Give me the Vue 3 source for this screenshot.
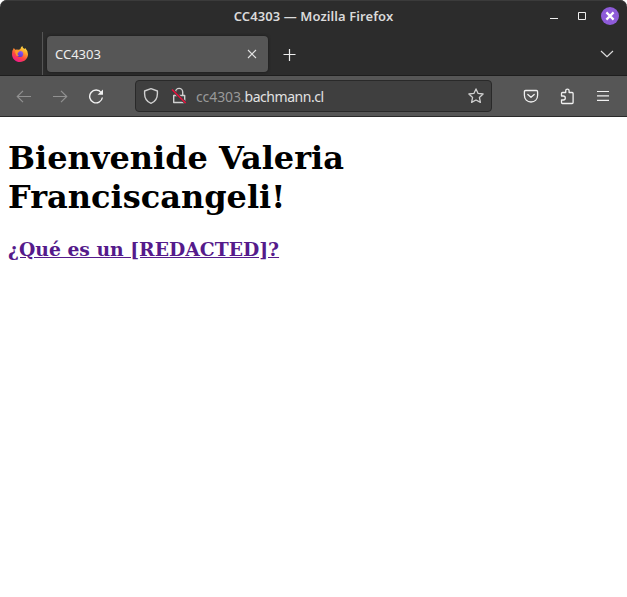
<script setup>
const title = 'CC4303 — Mozilla Firefox'
const tab = 'CC4303'
</script>

<template>
  <div class="window">
    <div class="chrome">
      <header class="titlebar">
        <span class="title">{{ title }}</span>
        <div class="controls">
          <svg width="18" height="18" viewBox="0 0 18 18"><path d="M5 11.5h8" stroke="#eee" /></svg>
          <svg width="18" height="18" viewBox="0 0 18 18"><path d="M5.5 5.5h7v7h-7z" fill="none" stroke="#eee" /></svg>
          <svg width="18" height="18" viewBox="0 0 18 18"><circle cx="9" cy="9" r="9" fill="#8e5bd9" /><path d="M5.4 5.4l7.2 7.2M12.6 5.4l-7.2 7.2" stroke="#fff" stroke-width="2.2" /></svg>
        </div>
      </header>
      <nav class="tabs">
        <div class="pinned">
          <svg width="18" height="18" viewBox="0 0 18 18">
            <defs>
              <linearGradient id="flame" x1=".85" y1="0" x2=".3" y2="1">
                <stop offset="0" stop-color="#fff44f" /><stop offset=".35" stop-color="#ffa42b" /><stop offset=".65" stop-color="#ff4a3f" /><stop offset="1" stop-color="#ef168f" />
              </linearGradient>
              <linearGradient id="globe" x1=".8" y1="0" x2=".3" y2="1">
                <stop offset="0" stop-color="#9059ff" /><stop offset="1" stop-color="#5a35c4" />
              </linearGradient>
            </defs>
            <path d="M2.8 3.1L4.3 4.8Q6 4.3 7.4 4.8Q8.8 4.6 9.4 3.9Q9.7 2.2 11.3 1Q11.5 3 13.5 4.1L14.2 2.9Q17 5.6 17 9.3C17 13.7 13.4 17 9 17S1 13.6 1 9.2Q1 5.5 2.8 3.1Z" fill="url(#flame)" />
            <circle cx="9.1" cy="9" r="3.1" fill="url(#globe)" />
            <path d="M4 5.2Q7 4.6 8.7 6.6L6.6 7.9Q6.1 9.9 8.2 10.6L5.7 11Q3.9 8.8 4 5.2Z" fill="#ff9a28" />
          </svg>
        </div>
        <div class="tab">
          <span>{{ tab }}</span>
          <svg width="16" height="16" viewBox="0 0 16 16"><path d="M4 4l8 8M12 4l-8 8" stroke="#e2e2e2" stroke-width="1.1" /></svg>
        </div>
        <svg class="plus" width="16" height="16" viewBox="0 0 16 16"><path d="M7.5 3v12M1.5 8.5h12" stroke="#eee" stroke-width="1.2" /></svg>
        <svg class="chevron" width="16" height="16" viewBox="0 0 16 16"><path d="M2 5l6 5.6L14 5" fill="none" stroke="#ddd" stroke-width="1.2" /></svg>
      </nav>
      <div class="toolbar">
        <svg class="back" width="16" height="16" viewBox="0 0 16 16" fill="none" stroke="#919191" stroke-width="1.2"><path d="M15 8.5H1.5M7 2.8L1.3 8.5 7 14.2" /></svg>
        <svg class="forward" width="16" height="16" viewBox="0 0 16 16" fill="none" stroke="#919191" stroke-width="1.2"><path d="M1 8.5h13.5M9 2.8l5.7 5.7L9 14.2" /></svg>
        <svg class="reload" width="16" height="16" viewBox="0 0 16 16"><path d="M13.2 4.6A6.4 6.4 0 1 0 14.4 9.5" fill="none" stroke="#f1f1f1" stroke-width="1.4" /><path d="M15 1.5v5.3H9.6z" fill="#f1f1f1" /></svg>
        <div class="address">
          <svg class="shield" width="16" height="18" viewBox="0 0 16 18"><path d="M8 1.7L14.4 4V6.8C14.4 11.5 12 14.8 8 16.4C4 14.8 1.6 11.5 1.6 6.8V4Z" fill="none" stroke="#d0d0d0" stroke-width="1.4" stroke-linejoin="round" /></svg>
          <svg class="lock" width="16" height="18" viewBox="0 0 16 18"><path d="M4.5 8V5a3.6 3.6 0 0 1 7.2 0v3M2.7 8.5h11v7h-11z" fill="none" stroke="#d0d0d0" stroke-width="1.4" stroke-linejoin="round" /><path d="M1 2.5L14.7 16" stroke="#3f3f3f" stroke-width="3" /><path d="M1 2.5L14.7 16" stroke="#e9103d" stroke-width="1.5" /></svg>
          <span class="url"><span class="sub">cc4303.</span>bachmann.cl</span>
          <svg class="star" width="16" height="16" viewBox="0 0 16 16"><path d="M8 .9l2.1 4.5 5 .6-3.7 3.4 1 5L8 12l-4.4 2.4 1-5L.9 6l5-.6z" fill="none" stroke="#d0d0d0" stroke-width="1.3" stroke-linejoin="round" /></svg>
        </div>
        <svg class="pocket" width="16" height="16" viewBox="0 0 16 16" fill="none" stroke="#f0f0f0" stroke-width="1.3" stroke-linecap="round" stroke-linejoin="round"><path d="M2.6 2.5h10.8q1.2 0 1.2 1.2v3.6c0 4-2.7 6.7-6.6 6.7S1.4 11.3 1.4 7.3V3.7q0-1.2 1.2-1.2z" /><path d="M4.8 6.5L8 9.3l3.2-2.8" /></svg>
        <svg class="puzzle" width="16" height="17" viewBox="0 0 16 17" fill="none" stroke="#f0f0f0" stroke-width="1.3" stroke-linejoin="round"><path d="M2.5 8V5.5q0-1 1-1h3.2V2.8a1.7 1.7 0 0 1 3.4 0v1.7h3q1 0 1 1v9q0 1-1 1H3.5q-1 0-1-1V12h1.8a2 2 0 0 0 0-4z" /></svg>
        <svg class="menu" width="16" height="16" viewBox="0 0 16 16"><path d="M2 3.5h12M2 7.9h12M2 12.3h12" stroke="#f0f0f0" stroke-width="1.2" /></svg>
      </div>
    </div>
    <main class="page">
      <h1>Bienvenide Valeria<br>Franciscangeli!</h1>
      <h3><a href="#">¿Qué es un [REDACTED]?</a></h3>
    </main>
  </div>
</template>

<style>
body { background: #fff; }
</style>

<style scoped>
.window { height: 597px; overflow: hidden; background: #fff; }
.window svg { display: block; flex: none; }
.chrome { background: #2c2c2c; border-radius: 7px 7px 0 0; box-shadow: inset 0 1px #3b3b3b; font-family: "Noto Sans", sans-serif; }
.titlebar { box-sizing: border-box; height: 32px; display: grid; grid-template-columns: 1fr auto 1fr; align-items: center; }
.title { grid-column: 2; color: #dadada; font-size: 13px; font-weight: 600; letter-spacing: .08px; white-space: nowrap; }
.controls { display: flex; justify-content: flex-end; gap: 10px; padding-right: 8px; }
.tabs { box-sizing: border-box; height: 44px; display: flex; align-items: center; border-bottom: 1px solid #1e1e1e; }
.pinned { box-sizing: border-box; width: 43px; height: 43px; padding: 13px 0 0 11px; border-right: 1px solid #555; }
.tab { box-sizing: border-box; width: 221px; height: 36px; margin-left: 4px; padding: 0 8px; display: flex; align-items: center; justify-content: space-between; border-radius: 4px; background: #565656; box-shadow: 0 0 3px #171717; color: #eee; font-size: 13px; }
.plus { margin-left: 14px; }
.chevron { margin-left: auto; margin-right: 12px; }
.toolbar { box-sizing: border-box; height: 41px; display: flex; align-items: center; padding-left: 16px; background: #565656; border-bottom: 1px solid #2a2a2a; }
.forward, .reload { margin-left: 20px; }
.address { box-sizing: border-box; width: 357px; height: 32px; margin-left: 31px; padding: 0 7px; display: flex; align-items: center; background: #3f3f3f; border: 1px solid #292929; border-radius: 4px; }
.lock { margin-left: 12px; }
.url { margin-left: 9px; color: #e2e2e2; font-size: 14px; letter-spacing: -.46px; white-space: nowrap; }
.sub { color: #999; letter-spacing: -.1px; }
.star { margin-left: auto; }
.pocket { margin-left: 31px; }
.puzzle { margin-left: 20px; }
.menu { margin-left: 20px; }
.page { padding: 22px 8px 0; font-family: "DejaVu Serif", serif; }
h1 { margin: 0 0 21px; font-size: 32px; line-height: 39px; font-weight: 700; color: #000; }
h3 { margin: 0; font-size: 18.75px; line-height: 22px; font-weight: 700; }
a { color: #551a8b; }
</style>
